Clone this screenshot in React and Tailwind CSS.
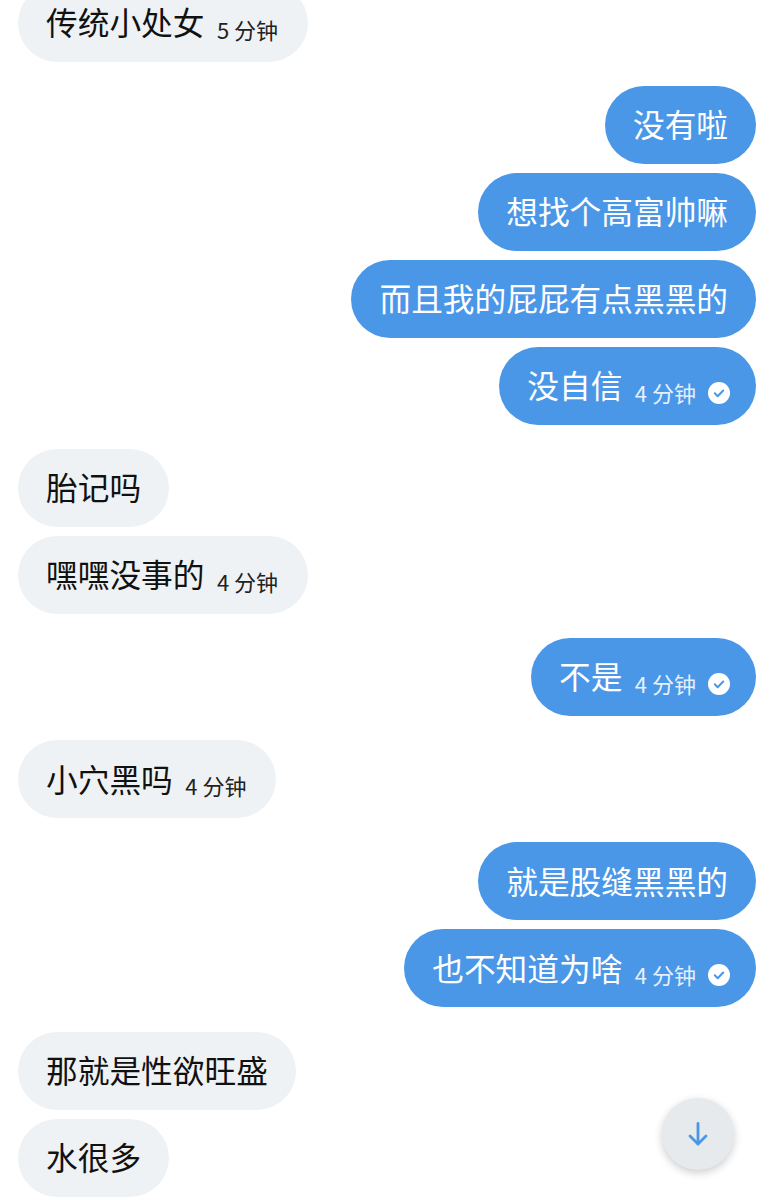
import React from "react";

const groups = [
  { mine: false, items: [{ text: "传统小处女", time: "5 分钟" }] },
  {
    mine: true,
    items: [
      { text: "没有啦" },
      { text: "想找个高富帅嘛" },
      { text: "而且我的屁屁有点黑黑的" },
      { text: "没自信", time: "4 分钟" },
    ],
  },
  { mine: false, items: [{ text: "胎记吗" }, { text: "嘿嘿没事的", time: "4 分钟" }] },
  { mine: true, items: [{ text: "不是", time: "4 分钟" }] },
  { mine: false, items: [{ text: "小穴黑吗", time: "4 分钟" }] },
  { mine: true, items: [{ text: "就是股缝黑黑的" }, { text: "也不知道为啥", time: "4 分钟" }] },
  { mine: false, items: [{ text: "那就是性欲旺盛" }, { text: "水很多" }] },
];

const ReadCheck = () => (
  <svg width="22" height="22" viewBox="0 0 22 22" className="ml-[12px] mt-[16px] shrink-0">
    <circle cx="11" cy="11" r="11" fill="#fff" />
    <path d="M6.8 11.3l2.9 2.9 5.5-5.7" fill="none" stroke="#4a97e8" strokeWidth="2" strokeLinecap="round" strokeLinejoin="round" />
  </svg>
);

const Bubble = ({ text, time, mine }) => (
  <div
    className={`flex h-[78px] items-center rounded-[39px] pb-[2px] pl-[28px] ${
      mine ? "bg-[#4a97e8] text-white" : "bg-[#eff2f4] text-[#111]"
    } ${time ? (mine ? "pr-[26px]" : "pr-[30px]") : "pr-[28px]"}`}
  >
    <span className="text-[31.7px] leading-none whitespace-nowrap">{text}</span>
    {time && (
      <span className={`ml-[12.5px] mt-[13px] text-[22px] leading-none whitespace-nowrap ${mine ? "text-[#e6f0fb]" : "text-[#222]"}`}>
        {time}
      </span>
    )}
    {time && mine && <ReadCheck />}
  </div>
);

export default function App() {
  return (
    <div
      className="relative h-[1200px] w-[773px] overflow-hidden bg-white"
      style={{ fontFamily: '"Noto Sans CJK SC", "Noto Sans", sans-serif' }}
    >
      <div className="-mt-[16px] flex flex-col gap-[24.1px] pl-[18px] pr-[17px]">
        {groups.map((group, i) => (
          <div key={i} className={`flex flex-col gap-[9px] ${group.mine ? "items-end" : "items-start"}`}>
            {group.items.map((item, j) => (
              <Bubble key={j} {...item} mine={group.mine} />
            ))}
          </div>
        ))}
      </div>

      <button className="absolute left-[662px] top-[1098px] flex h-[72px] w-[72px] items-center justify-center rounded-full bg-[#e6eaed] shadow-[0_3px_8px_rgba(0,0,0,0.2)]">
        <svg width="20" height="24" viewBox="0 0 20 24" fill="none" stroke="#4a97e8" strokeWidth="2.8" strokeLinecap="round" strokeLinejoin="round">
          <path d="M10 1.5v20.5" />
          <path d="M2 14l8 8 8-8" />
        </svg>
      </button>
    </div>
  );
}
